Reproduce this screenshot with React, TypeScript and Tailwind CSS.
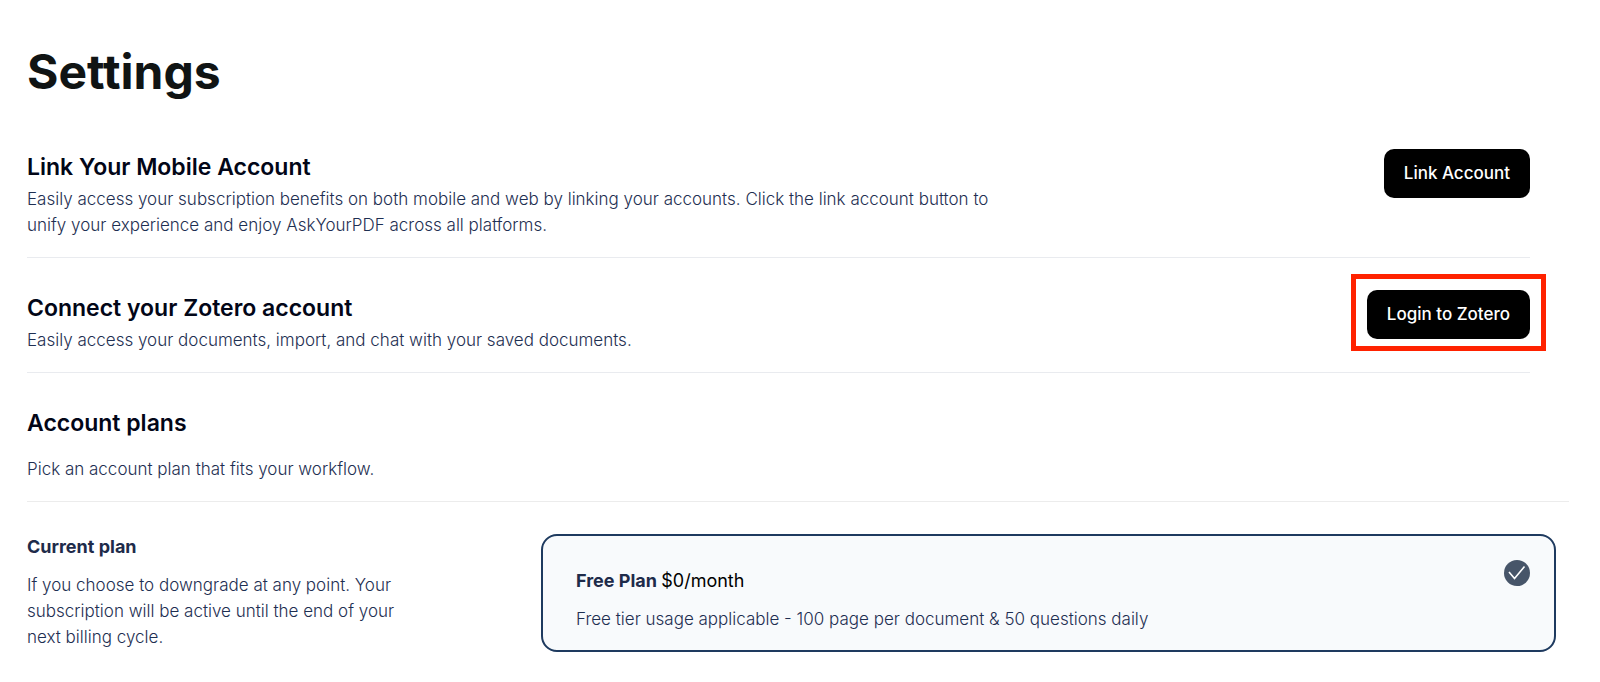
import type { ReactNode } from "react";

interface SettingRowProps {
  title: string;
  description: string;
  children: ReactNode;
}

const SettingRow = ({ title, description, children }: SettingRowProps) => {
  return (
    <section className="mr-[39px] flex items-start justify-between border-b border-[#e9ebef] pb-[19px]">
      <div className="max-w-[980px]">
        <h2 className="text-[23px] leading-9 font-semibold text-[#020617]">
          {title}
        </h2>
        <p className="mt-px text-[17px] leading-[26px] font-light text-[#1e2f52]">
          {description}
        </p>
      </div>
      {children}
    </section>
  );
};

const ActionButton = ({ label }: { label: string }) => {
  return (
    <button
      type="button"
      className="h-[49px] rounded-[10px] bg-black px-5 text-[17px] font-medium text-white"
    >
      {label}
    </button>
  );
};

const CheckBadge = () => {
  return (
    <svg viewBox="0 0 26 26" className="size-[26px]" aria-hidden="true">
      <circle cx="13" cy="13" r="13" fill="#475569" />
      <path
        d="M5 12 L10.5 18.5 L20.5 6.5"
        fill="none"
        stroke="#fff"
        strokeWidth="1.6"
      />
    </svg>
  );
};

const App = () => {
  return (
    <main className="bg-white pt-[42px] pr-[31px] pb-[31px] pl-[27px] font-['Inter',sans-serif]">
      <h1 className="text-5xl leading-[60px] font-bold text-[#101414]">
        Settings
      </h1>

      <div className="mt-[47px] flex flex-col gap-8">
        <SettingRow
          title="Link Your Mobile Account"
          description="Easily access your subscription benefits on both mobile and web by linking your accounts. Click the link account button to unify your experience and enjoy AskYourPDF across all platforms."
        >
          <ActionButton label="Link Account" />
        </SettingRow>

        <SettingRow
          title="Connect your Zotero account"
          description="Easily access your documents, import, and chat with your saved documents."
        >
          <div className="relative">
            <ActionButton label="Login to Zotero" />
            <span className="pointer-events-none absolute -inset-x-4 -top-4 -bottom-3 border-5 border-[#ff2200]" />
          </div>
        </SettingRow>

        <section className="border-b border-[#ececec] pb-[19px]">
          <h2 className="text-[23px] leading-9 font-semibold text-[#020617]">
            Account plans
          </h2>
          <p className="mt-[15px] text-[17px] leading-[26px] font-light text-[#1e2f52]">
            Pick an account plan that fits your workflow.
          </p>
        </section>

        <section className="mr-[13px] grid grid-cols-[514px_1fr] items-start">
          <div className="max-w-[380px]">
            <h3 className="text-lg leading-[26px] font-bold text-[#1e2b4a]">
              Current plan
            </h3>
            <p className="mt-3 text-[17px] leading-[26px] font-light text-[#1e2f52]">
              If you choose to downgrade at any point. Your subscription will be
              active until the end of your next billing cycle.
            </p>
          </div>

          <div className="flex justify-between rounded-2xl border-2 border-[#1e3a5f] bg-[#f8fafc] pt-6 pr-6 pb-[18px] pl-[33px]">
            <div className="pt-2">
              <h3 className="text-lg leading-[26px] font-bold text-[#1e2b4a]">
                Free Plan{" "}
                <span className="font-normal text-black">$0/month</span>
              </h3>
              <p className="mt-3 text-[17px] leading-[26px] font-light text-[#1e2f52]">
                Free tier usage applicable - 100 page per document &amp; 50
                questions daily
              </p>
            </div>
            <CheckBadge />
          </div>
        </section>
      </div>
    </main>
  );
};

export default App;
